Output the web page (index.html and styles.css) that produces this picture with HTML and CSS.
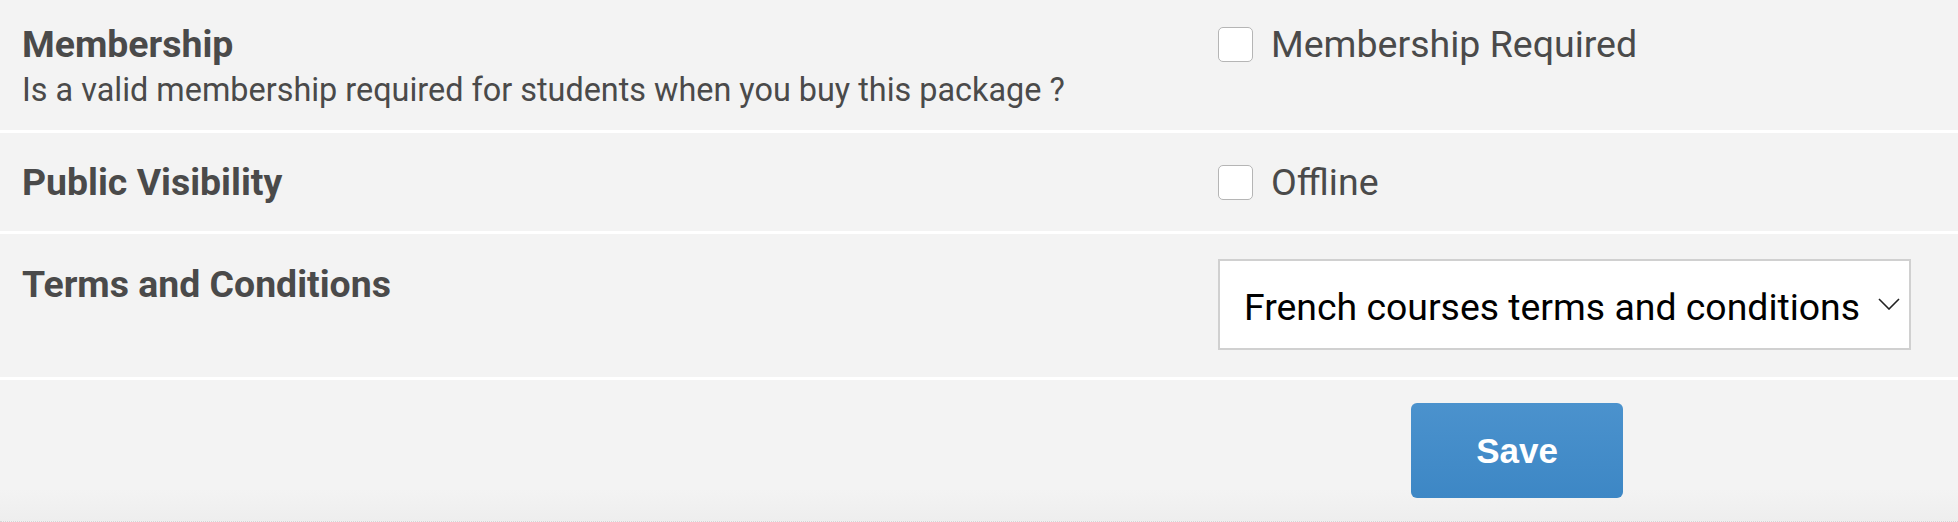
FILE: index.html
```html
<!DOCTYPE html>
<html lang="en">
<head>
<meta charset="utf-8">
<title>Package settings</title>
<link rel="stylesheet" href="styles.css">
</head>
<body>
<form class="settings">
  <div class="row row-membership">
    <div class="label-cell">
      <div class="label">Membership</div>
      <div class="hint">Is a valid membership required for students when you buy this package ?</div>
    </div>
    <div class="field-cell">
      <label class="check"><span class="box"></span><span class="check-text">Membership Required</span></label>
    </div>
  </div>
  <div class="row row-visibility">
    <div class="label-cell">
      <div class="label">Public Visibility</div>
    </div>
    <div class="field-cell">
      <label class="check"><span class="box"></span><span class="check-text">Offline</span></label>
    </div>
  </div>
  <div class="row row-terms">
    <div class="label-cell">
      <div class="label">Terms and Conditions</div>
    </div>
    <div class="field-cell">
      <div class="select">
        <span class="select-text">French courses terms and conditions</span>
        <svg class="chevron" width="22" height="12" viewBox="0 0 22 12" aria-hidden="true"><path d="M1 1 L11 11 L21 1" fill="none" stroke="#222" stroke-width="1.6"/></svg>
      </div>
    </div>
  </div>
  <div class="row row-actions">
    <div class="label-cell"></div>
    <div class="field-cell">
      <button type="button" class="save">Save</button>
    </div>
  </div>
</form>
</body>
</html>
```
FILE: styles.css
```css
html, body {
  margin: 0;
  padding: 0;
  height: 100%;
}
body {
  background: #f3f3f3;
  font-family: Roboto, "Liberation Sans", sans-serif;
  color: #4a4a4a;
}
.settings {
  display: flex;
  flex-direction: column;
  min-height: 100%;
}
.row {
  display: grid;
  grid-template-columns: 1196px 1fr;
  padding-left: 22px;
  border-bottom: 3px solid #ffffff;
}
.label {
  font-size: 37.4px;
  font-weight: 700;
  line-height: 44px;
}
.hint {
  font-size: 32.4px;
  line-height: 40px;
  margin-top: 4px;
}
.row-membership {
  padding: 22px 0 20px 22px;
}
.row-visibility {
  padding: 27px 0 27px 22px;
}
.row-terms {
  padding: 25px 0 27px 22px;
}
.row-terms .label {
  margin-top: 3px;
}
.field-cell {
  display: flex;
  align-items: flex-start;
}
.check {
  display: flex;
  align-items: center;
  gap: 18px;
  height: 44px;
}
.box {
  width: 33px;
  height: 33px;
  background: #fff;
  border: 1.5px solid #b5b5b5;
  border-radius: 5px;
}
.check-text {
  font-size: 37.5px;
  line-height: 44px;
}
.select {
  box-sizing: border-box;
  width: 693px;
  height: 91px;
  background: #fff;
  border: 2px solid #d0d0d0;
  display: flex;
  align-items: center;
  justify-content: space-between;
  padding: 4px 9px 0 24px;
}
.select-text {
  font-size: 37.4px;
  color: #000;
  white-space: nowrap;
}
.chevron {
  display: block;
  margin-top: -6px;
}
.row-actions {
  flex: 1;
  border-bottom: 1px dotted #d6d6d6;
  padding-top: 23px;
  background: linear-gradient(to bottom, #f3f3f3 0, #f3f3f3 calc(100% - 32px), #eeeeee 100%);
}
.row-actions .field-cell {
  padding-left: 193px;
}
.save {
  width: 212px;
  height: 95px;
  border: 0;
  border-radius: 6px;
  background: linear-gradient(to bottom, #4b92cd, #3d87c5);
  color: #fff;
  font-family: "Liberation Sans", Arial, sans-serif;
  font-weight: 700;
  font-size: 35px;
  cursor: pointer;
}
```
